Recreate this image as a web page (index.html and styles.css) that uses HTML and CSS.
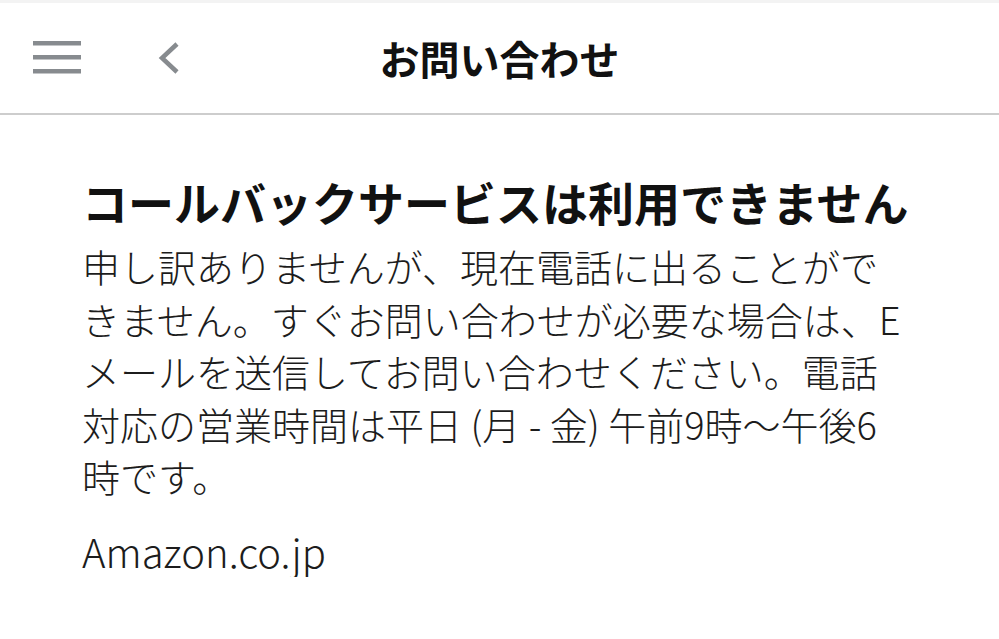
FILE: index.html
```html
<!DOCTYPE html>
<html lang="ja">
<head>
    <meta charset="UTF-8">
    <meta name="viewport" content="width=device-width, initial-scale=1.0">
    <title>お問い合わせ</title>
    <link rel="stylesheet" href="styles.css">
</head>
<body>
    <div class="top-strip"></div>
    <header class="nav-bar">
        <div class="nav-left">
            <svg class="menu-icon" width="48" height="34" viewBox="0 0 48 34">
                <rect x="0" y="0" width="48" height="4.5" fill="#878b8f"/>
                <rect x="0" y="14" width="48" height="4.5" fill="#878b8f"/>
                <rect x="0" y="28" width="48" height="4.5" fill="#878b8f"/>
            </svg>
            <svg class="back-icon" width="24" height="34" viewBox="0 0 24 34">
                <polyline points="20,3 5,17 20,31" fill="none" stroke="#878b8f" stroke-width="4.5"/>
            </svg>
        </div>
        <h1 class="nav-title">お問い合わせ</h1>
        <div class="nav-right"></div>
    </header>

    <main class="content">
        <h2 class="notice-title">コールバックサービスは利用できません</h2>
        <p class="notice-text">申し訳ありませんが、現在電話に出ることができません。すぐお問い合わせが必要な場合は、Eメールを送信してお問い合わせください。電話対応の営業時間は平日 (月 - 金) 午前9時〜午後6時です。</p>
        <p class="notice-sign">Amazon.co.jp</p>
    </main>
</body>
</html>
```

FILE: styles.css
```css
body {
    margin: 0;
    font-family: "Noto Sans CJK JP", "Noto Sans", sans-serif;
    background-color: #fff;
    color: #1a1a1a;
}

.top-strip {
    height: 3px;
    background-color: #f3f3f3;
}

.nav-bar {
    display: grid;
    grid-template-columns: 1fr auto 1fr;
    align-items: center;
    height: 110px;
    border-bottom: 2px solid #cdcdcd;
}

.nav-left {
    display: flex;
    align-items: center;
    padding-left: 33px;
    gap: 76px;
}

.menu-icon,
.back-icon {
    display: block;
}

.nav-title {
    margin: 0;
    font-size: 40px;
    font-weight: 700;
    color: #111;
    line-height: 1;
}

.content {
    padding: 57px 90px 0 82px;
}

.notice-title {
    margin: 0 -10px 10px 0;
    font-size: 46px;
    font-weight: 700;
    line-height: 58px;
    color: #111;
}

.notice-text {
    margin: 0;
    font-size: 38px;
    font-weight: 300;
    line-height: 52.5px;
    color: #1c1c1c;
}

.notice-sign {
    margin: 22px 0 0;
    font-size: 40px;
    font-weight: 300;
    line-height: 52px;
    color: #1c1c1c;
}
```
